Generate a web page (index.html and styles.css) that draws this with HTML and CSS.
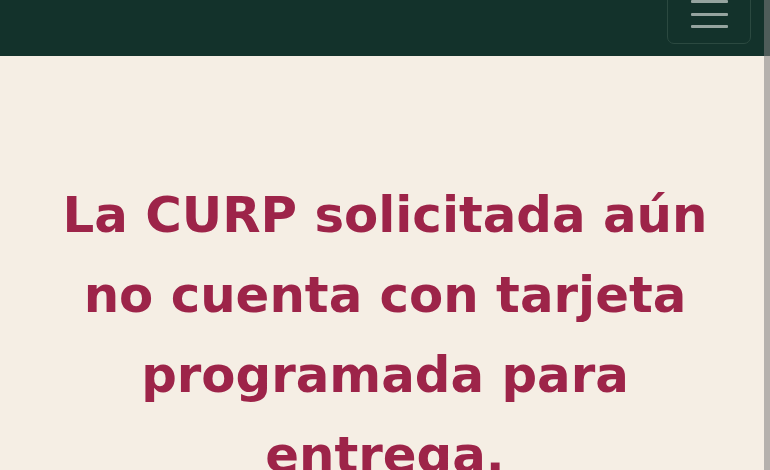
FILE: index.html
```html
<!DOCTYPE html>
<html lang="es">
<head>
<meta charset="utf-8">
<title>Consulta CURP</title>
<link rel="stylesheet" href="styles.css">
</head>
<body>
<header class="topbar">
  <button class="toggler" type="button" aria-label="Menú">
    <span class="bar"></span>
    <span class="bar"></span>
    <span class="bar"></span>
  </button>
</header>
<main class="content">
  <h1 class="message">La CURP solicitada aún no cuenta con tarjeta programada para entrega.</h1>
</main>
<div class="scrollstrip"></div>
</body>
</html>
```

FILE: styles.css
```css
html, body {
  margin: 0;
  padding: 0;
  background: #f5eee4;
  overflow: hidden;
}
body {
  font-family: "DejaVu Sans", "Liberation Sans", sans-serif;
  width: 770px;
  height: 470px;
}
.topbar {
  height: 56px;
  background: #13322b;
  display: flex;
  justify-content: flex-end;
  align-items: flex-start;
  padding-right: 19px;
  box-sizing: border-box;
  overflow: hidden;
}
.toggler {
  margin-top: -16px;
  width: 84px;
  height: 60px;
  border: 1px solid #2b4940;
  border-radius: 7px;
  background: transparent;
  display: flex;
  flex-direction: column;
  align-items: center;
  justify-content: center;
  gap: 9.5px;
  padding: 0;
}
.bar {
  display: block;
  width: 37px;
  height: 3px;
  border-radius: 1px;
  background: #95a49f;
}
.content {
  padding: 119px 30px 0;
}
.message {
  margin: 0;
  text-align: center;
  color: #9d2449;
  font-size: 49.8px;
  line-height: 80px;
  font-weight: 700;
}
.scrollstrip {
  position: fixed;
  top: 0;
  right: 0;
  width: 6px;
  height: 100%;
  background: rgba(128, 128, 128, 0.55);
}
```
